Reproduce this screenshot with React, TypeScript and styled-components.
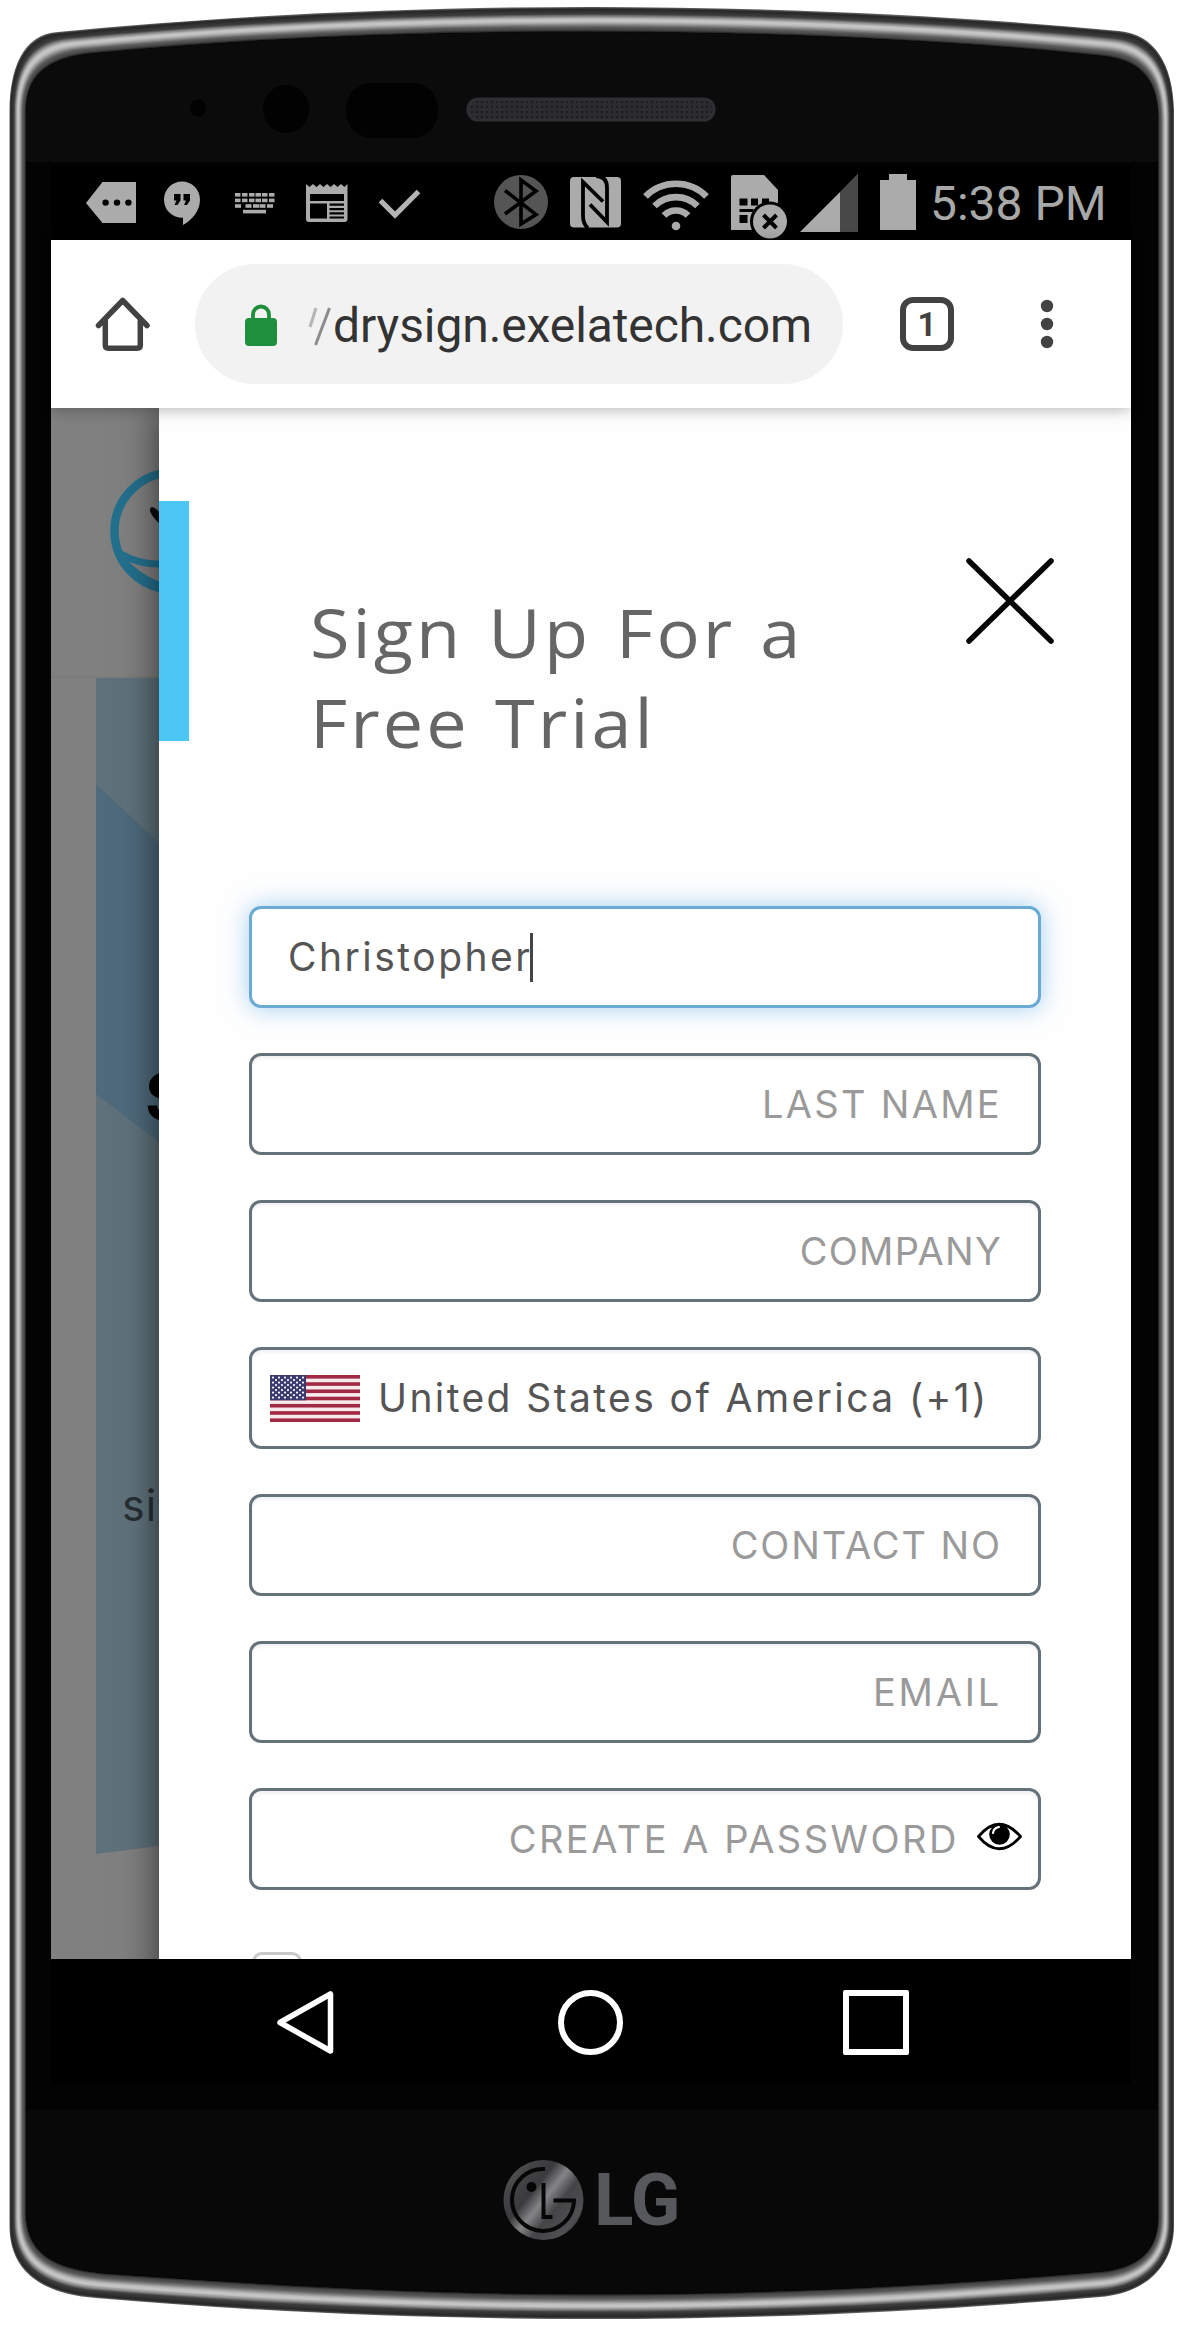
import React from "react";
import styled, { createGlobalStyle } from "styled-components";

const Global = createGlobalStyle`
  body { margin: 0; background: #fff; }
  * { box-sizing: border-box; }
`;

const Device = styled.main`
  position: relative;
  width: 1183px;
  height: 2326px;
  overflow: hidden;
  display: flex;
  flex-direction: column;
  padding-left: 51px;
  font-family: Roboto, "Liberation Sans", sans-serif;
`;

const Shell = styled.svg`
  position: absolute;
  inset: 0;
  z-index: -1;
`;

const Forehead = styled.div`
  flex: 0 0 165px;
`;

const Screen = styled.div`
  width: 1080px;
  background: #000;
`;

const StatusBar = styled.div`
  height: 75px;
  display: flex;
  padding: 8px 0 0 35px;
`;

const StatusGlyph = styled.svg<{ $gap: number }>`
  flex: none;
  margin-right: ${(p) => p.$gap}px;
  fill: #ababab;
`;

const Clock = styled.span`
  font-size: 48px;
  line-height: 56px;
  padding-top: 3px;
  color: #a8a8a8;
  white-space: pre;
`;

const Toolbar = styled.header`
  position: relative;
  z-index: 2;
  height: 168px;
  background: #fff;
  box-shadow: 0 2px 14px rgba(0, 0, 0, 0.28);
  display: flex;
  align-items: center;
  padding-left: 44px;
`;

const HomeIcon = styled.svg`
  margin-right: 45px;
`;

const AddressBar = styled.div`
  width: 648px;
  height: 120px;
  border-radius: 60px;
  background: #f2f2f2;
  display: flex;
  align-items: center;
  padding-left: 50px;
`;

const Slashes = styled.svg`
  margin: 3px 1px 0 31px;
`;

const Host = styled.span`
  font-size: 48px;
  line-height: 56px;
  letter-spacing: -0.1px;
  color: #333;
  padding-top: 4px;
`;

const TabCount = styled.div`
  width: 54px;
  height: 54px;
  margin-left: 57px;
  border: 6px solid #424242;
  border-radius: 13px;
  display: flex;
  align-items: center;
  justify-content: center;
  font-size: 33px;
  font-weight: 700;
  color: #424242;
`;

const Dots = styled.svg`
  margin-left: 86px;
`;

const Viewport = styled.div`
  height: 1551px;
  display: grid;
  grid-template-columns: 108px 972px;
  overflow: hidden;
  background: #fff;
`;

const Backdrop = styled.div`
  background: #808080;
  overflow: hidden;
`;

const SiteHeader = styled.div`
  height: 270px;
  border-bottom: 2px solid #7b7b7b;
`;

const Hero = styled.div`
  height: 1176px;
  margin-left: 45px;
  background: #5f727b;
  clip-path: polygon(0 0, 100% 0, 100% 1168px, 0 1176px);
  display: flex;
  flex-direction: column;
`;

const Band = styled.div`
  height: 358px;
  margin-top: 106px;
  padding: 271px 0 0 49px;
  background: #4e6a7b;
  clip-path: polygon(0 0, 63px 59px, 63px 358px, 0 310px);
  font: 700 65px/84px Inter, sans-serif;
  color: #050505;
`;

const HeroCopy = styled.div`
  margin: 328px 0 0 26px;
  font: 400 43px/70px Inter, sans-serif;
  letter-spacing: 1px;
  white-space: nowrap;
  color: #272f33;
`;

const Drawer = styled.section`
  position: relative;
  background: #fefefe;
  box-shadow: 0 0 36px rgba(0, 0, 0, 0.62);
`;

const DrawerHead = styled.div`
  height: 498px;
  display: flex;
  align-items: flex-start;
`;

const Accent = styled.div`
  width: 30px;
  height: 240px;
  margin-top: 93px;
  background: #4bc5f3;
`;

const Title = styled.h1`
  width: 560px;
  margin: 179px 0 0 121px;
  font: 400 68px/90px "Open Sans", sans-serif;
  letter-spacing: 2.9px;
  word-spacing: 3px;
  transform: scaleX(1.06);
  transform-origin: left;
  color: #666;
  white-space: pre;
`;

const CloseIcon = styled.svg`
  margin: 149px 0 0 95px;
`;

const Form = styled.form`
  display: flex;
  flex-direction: column;
  gap: 45px;
  padding-left: 90px;
`;

const Field = styled.div<{ $focus?: boolean; $end?: boolean; $pad?: string }>`
  width: 792px;
  height: 102px;
  border: 3px solid ${(p) => (p.$focus ? "#6aaad3" : "#65727a")};
  border-radius: 12px;
  display: flex;
  align-items: center;
  justify-content: ${(p) => (p.$end ? "flex-end" : "flex-start")};
  padding: ${(p) => p.$pad ?? "0 36px"};
  background: #fff;
  box-shadow: ${(p) =>
    p.$focus
      ? "0 0 24px rgba(102, 175, 233, 0.6)"
      : "inset 0 3px 3px rgba(0, 20, 60, 0.05)"};
`;

const Value = styled.span<{ $track: number }>`
  font: 400 39px/50px Inter, sans-serif;
  letter-spacing: ${(p) => p.$track}px;
  margin-top: -1px;
  color: #555;
  white-space: nowrap;
`;

const Placeholder = styled.span<{ $track: number }>`
  font: 400 38px/50px Inter, sans-serif;
  letter-spacing: ${(p) => p.$track}px;
  color: #9a9a9a;
  white-space: nowrap;
`;

const Caret = styled.i`
  width: 3px;
  height: 49px;
  margin-left: -3px;
  background: #444;
`;

const Flag = styled.svg`
  margin-right: 18px;
`;

const EyeIcon = styled.svg`
  margin: -5px 0 0 18px;
`;

const Checkbox = styled.div`
  width: 50px;
  height: 50px;
  margin: 17px 0 0 3px;
  border: 3px solid #c9c9c9;
  border-radius: 10px;
`;

const NavBar = styled.nav`
  height: 126px;
  display: flex;
  align-items: center;
  padding-left: 224px;
`;

const HomeKey = styled.span`
  width: 65px;
  height: 65px;
  margin-left: 223px;
  border: 6px solid #fff;
  border-radius: 50%;
`;

const RecentKey = styled.span`
  width: 66px;
  height: 65px;
  margin-left: 220px;
  border: 6px solid #fff;
  border-radius: 2px;
`;

const Chin = styled.footer`
  height: 230px;
  display: flex;
  align-items: center;
  padding-left: 452px;
`;

const BrandName = styled.span`
  margin: -1px 0 0 10px;
  font: 700 73px/80px Roboto, sans-serif;
  letter-spacing: -0.5px;
  color: #56585b;
`;

/* Outer and inner edges of the metal rim, as a start point and cubic runs. */
const OUTER = [
  9.5, 110, 10, 70, 22, 34, 58, 32, 230, 15, 420, 7, 592, 7, 760, 7, 950, 15, 1119, 31, 1155, 34, 1173, 65, 1174, 110,
  1174, 800, 1174, 1500, 1174, 2226, 1174, 2262, 1150, 2293, 1100, 2297, 920, 2312, 760, 2319, 592, 2319, 420, 2319,
  260, 2312, 96, 2298, 40, 2294, 9.5, 2270, 9.5, 2226,
];
const INNER = [
  26, 115, 26, 85, 36, 61, 88, 54, 250, 38, 420, 32, 592, 32, 760, 32, 950, 40, 1100, 56, 1145, 60, 1158, 85, 1158, 120,
  1158, 800, 1158, 1500, 1158, 2215, 1158, 2250, 1140, 2266, 1105, 2271, 920, 2287, 760, 2294, 592, 2294, 420, 2294,
  260, 2284, 115, 2274, 60, 2270, 26, 2258, 26, 2210,
];
const rim = (t: number) => {
  const p = OUTER.map((v, i) => v + (INNER[i] - v) * t);
  return `M${p[0]} ${p[1]}C${p.slice(2).join(" ")}Z`;
};
const STOPS: [number, number][] = [
  [0, 95], [0.06, 38], [0.26, 62], [0.36, 135], [0.48, 200], [0.58, 190], [0.68, 140], [0.78, 92], [0.9, 68], [1, 6],
];
const shade = (t: number) => {
  const i = Math.max(1, STOPS.findIndex(([s]) => s >= t));
  const [a, b] = [STOPS[i - 1], STOPS[i]];
  const v = Math.round(a[1] + ((b[1] - a[1]) * (t - a[0])) / (b[0] - a[0]));
  return `rgb(${v},${v},${v + 1})`;
};
const RIM_STEPS = Array.from({ length: 31 }, (_, i) => i / 30);

function PhoneShell() {
  return (
    <Shell width="1183" height="2326">
      <defs>
        <clipPath id="face"><path d={rim(1)} /></clipPath>
        <pattern id="mesh" width="5" height="5" patternUnits="userSpaceOnUse">
          <rect width="5" height="5" fill="#2c2c30" />
          <circle cx="2" cy="2" r="1.1" fill="#17171a" />
        </pattern>
      </defs>
      {RIM_STEPS.map((t) => <path key={t} d={rim(t)} fill={shade(t)} />)}
      <path d={rim(1)} fill="#030303" />
      <g clipPath="url(#face)">
        <path d="M0 0H1183V162H0z" fill="#0b0b0c" />
        <path d="M0 2110H1183V2326H0z" fill="#080808" />
      </g>
      <ellipse cx="198" cy="108" rx="8" ry="9" fill="#020202" />
      <ellipse cx="286" cy="109" rx="23" ry="24" fill="#020202" />
      <rect x="346" y="83" width="92" height="55" rx="26" fill="#020202" />
      <rect x="468" y="99" width="246" height="21" rx="10" fill="url(#mesh)" stroke="#2f2f33" strokeWidth="3" />
    </Shell>
  );
}

const keyRow = (y: number, xs: number[], w: number) =>
  xs.map((x) => <rect key={`${x}-${y}`} x={x} y={y} width={w} height="3.6" />);

function StatusIcons() {
  return (
    <StatusBar>
      <StatusGlyph $gap={28} width="50" height="62" viewBox="86 173 50 62">
        <path d="M86 203l16.5-21H136v41h-33.5z" />
        <g fill="#000"><circle cx="105.6" cy="202.6" r="3.2" /><circle cx="117" cy="202.6" r="3.2" /><circle cx="128.4" cy="202.6" r="3.2" /></g>
      </StatusGlyph>
      <StatusGlyph $gap={35} width="36" height="62" viewBox="164 173 36 62">
        <path d="M182 181.5c-10 0-18 8-18 18.300s8 18 19 18v7.200c9-5 17-14 17-25.200 0-10.300-8-18.300-18-18.300z" />
        <path d="M174 194h6.500v6.500l-3 4.500h-3l2-4.500H174zM183.500 194h6.500v6.500l-3 4.500h-3l2-4.500h-2.500z" fill="#000" />
      </StatusGlyph>
      <StatusGlyph $gap={31} width="40" height="62" viewBox="235 173 40 62">
        {keyRow(193, [235, 242, 249, 255.5, 262, 269], 5.5)}
        {keyRow(198.6, [235, 242, 249, 255.5, 262, 269], 5.5)}
        {keyRow(204.2, [235, 245.5, 253, 259.5, 267], 6)}
        <rect x="243" y="209.8" width="23" height="3.6" />
      </StatusGlyph>
      <StatusGlyph $gap={30} width="43" height="62" viewBox="306 173 43 62">
        <path d="M306 184l3.500 3 3.500-3 3.500 3 3.500-3 3.500 3 3.500-3 3.500 3 3.500-3 3.500 3 3.500-3 3.500 3 3-3V219q0 3-3 3H309q-3 0-3-3z" />
        <path d="M310 194h34v7h-34zM310 203.500h17V218.500h-17zM329.500 203.500H344v2.300H329.500zM329.500 208H344v2.300H329.500zM329.500 212.300H344v2.300H329.500zM329.500 216.500H344v2H329.500z" fill="#000" />
      </StatusGlyph>
      <StatusGlyph $gap={73} width="42" height="62" viewBox="379 173 42 62">
        <path d="M380.500 200.500L395 215l23.500-23.500" fill="none" stroke="#b4b4b4" strokeWidth="5.2" />
      </StatusGlyph>
      <StatusGlyph $gap={22} width="54" height="62" viewBox="494 173 54 62">
        <circle cx="521" cy="202" r="27" fill="#555" />
        <path d="M505 190.500L536 214.500 521 224V180l15 11L505 214" fill="none" stroke="#000" strokeWidth="3.6" />
      </StatusGlyph>
      <StatusGlyph $gap={22} width="51" height="62" viewBox="570 173 51 62">
        <rect x="570" y="177" width="51" height="50.5" rx="4" />
        <path d="M588 228q-5-4-5-12V182l20 19.500M596 176q11 0 11 12v34L590 204.500" fill="none" stroke="#000" strokeWidth="3.8" />
      </StatusGlyph>
      <StatusGlyph $gap={22} width="66" height="62" viewBox="643 173 66 62">
        <g fill="none" stroke="#ababab" strokeWidth="6.6">
          <path d="M645.500 196.500a43 43 0 0 1 61 0" /><path d="M654.500 206a30.500 30.500 0 0 1 43 0" /><path d="M664 215.500a17 17 0 0 1 24 0" />
        </g>
        <circle cx="676" cy="226" r="4.3" />
      </StatusGlyph>
      <StatusGlyph $gap={12} width="57" height="66" viewBox="731 173 57 66">
        <path d="M733 175h31l14 15v40h-47v-53q0-2 2-2z" />
        <path d="M739.500 198.500h8v7h-8zM751 198.500h7v7h-7zM762 198.500h7v7h-7zM739.500 209h14v3h-14zM739.500 215h8v8h-8z" fill="#000" />
        <circle cx="770" cy="221.5" r="20" fill="#000" />
        <circle cx="770" cy="221.5" r="17" />
        <path d="M763.500 215l13 13m0-13l-13 13" stroke="#000" strokeWidth="4" />
      </StatusGlyph>
      <StatusGlyph $gap={22} width="58" height="62" viewBox="800 173 58 62">
        <path d="M800 232l40-40v40z" />
        <path d="M840 192l18-18.500V232h-18z" fill="#484848" />
      </StatusGlyph>
      <StatusGlyph $gap={14} width="36" height="62" viewBox="880 173 36 62">
        <path d="M889 174h18v6h9v50h-36v-50h9z" />
      </StatusGlyph>
      <Clock>5:38 PM</Clock>
    </StatusBar>
  );
}

function BrowserBar() {
  return (
    <Toolbar>
      <HomeIcon width="55" height="56" viewBox="95 296 55 56" fill="none" stroke="#424242" strokeWidth="5.5" strokeLinecap="round" strokeLinejoin="round">
        <path d="M98.500 325.500L122.700 300.500 147 325.500M105.300 321v24q0 3.200 3 3.200h29q3 0 3-3.200V321" />
      </HomeIcon>
      <AddressBar>
        <svg width="32" height="43" viewBox="245 301 32 43">
          <path d="M253 318v-5.500a8 8 0 0 1 16 0V318" fill="none" stroke="#1f8e3d" strokeWidth="3.8" />
          <rect x="245" y="316" width="32" height="28" rx="4" fill="#1f8e3d" />
        </svg>
        <Slashes width="24" height="40" viewBox="308 306 24 40" fill="none" strokeWidth="3">
          <path d="M310 327L316 308" stroke="#b5b5b5" />
          <path d="M315.500 345L329.500 308" stroke="#8c8c8c" />
        </Slashes>
        <Host>drysign.exelatech.com</Host>
      </AddressBar>
      <TabCount>1</TabCount>
      <Dots width="14" height="50" fill="#424242">
        <circle cx="7" cy="7" r="6.2" /><circle cx="7" cy="25" r="6.2" /><circle cx="7" cy="43" r="6.2" />
      </Dots>
    </Toolbar>
  );
}

function StarsAndStripes() {
  const stars = Array.from({ length: 9 }, (_, r) =>
    Array.from({ length: r % 2 ? 5 : 6 }, (_, c) => (
      <circle key={`${r}${c}`} cx={3 + c * 6 + (r % 2 ? 3 : 0)} cy={2.6 + r * 2.5} r="1.05" fill="#fff" />
    )),
  );
  return (
    <Flag width="90" height="47" viewBox="0 0 90 47">
      <rect width="90" height="47" fill="#f7e9ec" />
      {[0, 1, 2, 3, 4, 5, 6].map((i) => <rect key={i} y={i * 7.23} width="90" height="3.615" fill="#a02a43" />)}
      <rect width="36" height="25.3" fill="#3c3b6e" />
      {stars}
    </Flag>
  );
}

function BrandMark() {
  return (
    <svg width="81" height="80" viewBox="503 2160 81 80">
      <defs>
        <linearGradient id="metal" x1="0" y1=".1" x2="1" y2=".9">
          <stop stopColor="#5a5a5c" />
          <stop offset=".2" stopColor="#444446" />
          <stop offset=".36" stopColor="#3a3a3c" />
          <stop offset=".5" stopColor="#858588" />
          <stop offset=".64" stopColor="#444446" />
          <stop offset=".85" stopColor="#505052" />
          <stop offset="1" stopColor="#262628" />
        </linearGradient>
      </defs>
      <circle cx="543.5" cy="2200" r="40" fill="url(#metal)" />
      <path d="M545 2169a31 31 0 1 0 29 31.500H553.500M543.500 2183v34h9" fill="none" stroke="#060606" strokeWidth="4" />
      <circle cx="531.500" cy="2187" r="5" fill="#060606" />
    </svg>
  );
}

export default function App() {
  return (
    <>
      <Global />
      <Device>
        <PhoneShell />
        <Forehead />
        <Screen>
          <StatusIcons />
          <BrowserBar />
          <Viewport>
            <Backdrop>
              <SiteHeader>
                <svg width="108" height="268" viewBox="51 408 108 268" fill="none" stroke="#23708d" strokeWidth="8.5">
                  <circle cx="173" cy="531" r="58.5" />
                  <path d="M119 553q20 12 44 11M121 558q16 20 40 28" strokeWidth="7" />
                  <path d="M152 507q4 1 8 6v11q-8-7-10-13 0-4 2-4z" fill="#0a0a0a" stroke="none" />
                </svg>
              </SiteHeader>
              <Hero>
                <Band>S</Band>
                <HeroCopy>si</HeroCopy>
              </Hero>
            </Backdrop>
            <Drawer>
              <DrawerHead>
                <Accent />
                <Title>{"Sign Up For a\nFree Trial"}</Title>
                <CloseIcon width="90" height="88" viewBox="0 0 90 88" fill="none" stroke="#050505" strokeWidth="5.5" strokeLinecap="round">
                  <path d="M4 4L86 84M86 4L4 84" />
                </CloseIcon>
              </DrawerHead>
              <Form>
                <Field $focus><Value $track={2.5}>Christopher</Value><Caret /></Field>
                <Field $end><Placeholder $track={2.3}>LAST NAME</Placeholder></Field>
                <Field $end><Placeholder $track={1.3}>COMPANY</Placeholder></Field>
                <Field $pad="0 0 0 18px"><StarsAndStripes /><Value $track={2.4}>United States of America (+1)</Value></Field>
                <Field $end><Placeholder $track={1.9}>CONTACT NO</Placeholder></Field>
                <Field $end><Placeholder $track={2.8}>EMAIL</Placeholder></Field>
                <Field $end $pad="0 16px">
                  <Placeholder $track={2.5}>CREATE A PASSWORD</Placeholder>
                  <EyeIcon width="45" height="29" viewBox="0 0 45 29">
                    <path d="M1.500 14.500Q22-10 43.500 14.500 22 39 1.500 14.500z" fill="none" stroke="#000" strokeWidth="2.8" strokeLinejoin="round" />
                    <circle cx="22.5" cy="12.5" r="10.3" />
                    <path d="M16 11q.5-5 6-6" fill="none" stroke="#fff" strokeWidth="2.2" strokeLinecap="round" />
                  </EyeIcon>
                </Field>
                <Checkbox />
              </Form>
            </Drawer>
          </Viewport>
          <NavBar>
            <svg width="60" height="65" viewBox="0 0 60 65">
              <path d="M5 32.500L55.500 4v57z" fill="none" stroke="#fff" strokeWidth="5.5" strokeLinejoin="round" />
            </svg>
            <HomeKey />
            <RecentKey />
          </NavBar>
        </Screen>
        <Chin>
          <BrandMark />
          <BrandName>LG</BrandName>
        </Chin>
      </Device>
    </>
  );
}
